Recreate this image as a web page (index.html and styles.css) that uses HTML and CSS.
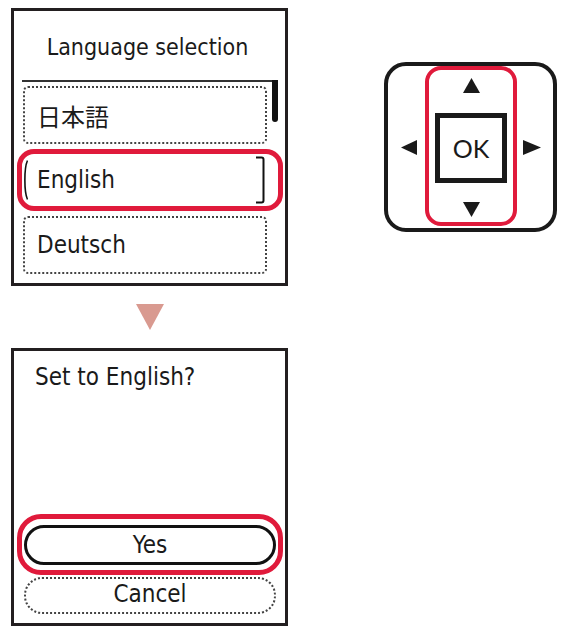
FILE: index.html
```html
<!DOCTYPE html>
<html lang="en">
<head>
<meta charset="utf-8">
<title>Language selection</title>
<link rel="stylesheet" href="styles.css">
</head>
<body>
<div class="page">
  <div class="col">
    <section class="screen">
      <header class="screen-head"><h1 class="title">Language selection</h1></header>
      <div class="divider"></div>
      <div class="list-wrap">
        <ul class="list">
          <li class="item">日本語</li>
          <li class="item item-selected">
            <svg class="br-left" width="5" height="40" viewBox="0 0 5 40"><path d="M4.5 0.5 C1 8 1 32 4.5 39.5" fill="none" stroke="#111" stroke-width="1.6"/></svg>
            <span>English</span>
            <svg class="br-right" width="9" height="48" viewBox="0 0 9 48"><path d="M0 1.5 H5.5 C6.8 1.5 7.5 2.3 7.5 3.5 V44.5 C7.5 45.7 6.8 46.5 5.5 46.5 H0" fill="none" stroke="#111" stroke-width="2"/></svg>
          </li>
          <li class="item">Deutsch</li>
        </ul>
        <div class="scroll"><div class="thumb"></div></div>
      </div>
    </section>
    <svg class="next-arrow" width="28" height="26" viewBox="0 0 28 26"><polygon points="0,0 28,0 14,26" fill="#d99a90"/></svg>
    <section class="screen screen-confirm">
      <p class="question">Set to English?</p>
      <div class="buttons">
        <div class="btn btn-yes">Yes</div>
        <div class="btn btn-cancel">Cancel</div>
      </div>
    </section>
  </div>
  <div class="dpad">
    <svg class="arrow-side" width="16" height="15" viewBox="0 0 16 15"><polygon points="16,0 16,15 0,7.5" fill="#1a1a1a"/></svg>
    <div class="pad-col">
      <svg width="17" height="15" viewBox="0 0 17 15"><polygon points="0,15 17,15 8.5,0" fill="#1a1a1a"/></svg>
      <div class="ok">OK</div>
      <svg width="17" height="15" viewBox="0 0 17 15"><polygon points="0,0 17,0 8.5,15" fill="#1a1a1a"/></svg>
    </div>
    <svg class="arrow-side" width="18" height="15" viewBox="0 0 18 15"><polygon points="0,0 0,15 18,7.5" fill="#1a1a1a"/></svg>
  </div>
</div>
</body>
</html>
```

FILE: styles.css
```css
* {
  box-sizing: border-box;
  margin: 0;
  padding: 0;
}

body {
  background: #fff;
  color: #1a1a1a;
  font-family: "DejaVu Sans Condensed", "DejaVu Sans", "Noto Sans CJK JP", sans-serif;
  font-stretch: condensed;
}

.page {
  display: flex;
  align-items: flex-start;
  gap: 96px;
  padding: 8px 0 0 11px;
}

.col {
  display: flex;
  flex-direction: column;
  align-items: center;
  width: 277px;
}

.screen {
  width: 277px;
  height: 278px;
  border: 3px solid #231f20;
  display: flex;
  flex-direction: column;
}

.screen-head {
  padding: 23px 0 19px;
  text-align: center;
}

.title {
  font-size: 23px;
  line-height: 27px;
  font-weight: normal;
  padding-right: 4px;
}

.divider {
  height: 2px;
  margin: 0 7px 0 8px;
  background: #333;
}

.list-wrap {
  display: flex;
  padding-left: 9px;
}

.list {
  list-style: none;
  width: 244px;
  display: flex;
  flex-direction: column;
  gap: 7px;
  padding-top: 4px;
}

.item {
  height: 58px;
  border: 2px dotted #444;
  border-radius: 5px;
  display: flex;
  align-items: center;
  padding-left: 12px;
  font-size: 24px;
}

.item-selected {
  position: relative;
  border-color: transparent;
  padding-left: 0;
}

.item-selected::after {
  content: "";
  position: absolute;
  top: -4px;
  bottom: -4px;
  left: -8px;
  right: -18px;
  border: 5px solid #e01a3b;
  border-radius: 17px;
}

.br-left {
  display: block;
  margin-left: -2px;
  margin-right: 9px;
}

.br-right {
  display: block;
  margin-left: auto;
  margin-right: 0;
}

.scroll {
  width: 6px;
  margin-left: 5px;
}

.thumb {
  height: 42px;
  margin-top: -2px;
  background: #111;
  border-radius: 0 0 3px 3px;
}

.next-arrow {
  display: block;
  margin: 18px 0;
}

.question {
  font-size: 24px;
  line-height: 28px;
  padding: 12px 0 0 21px;
}

.buttons {
  margin-top: auto;
  padding: 0 9px 9px 10px;
  display: flex;
  flex-direction: column;
  gap: 12px;
}

.btn {
  display: flex;
  align-items: center;
  justify-content: center;
  font-size: 24px;
}

.btn-yes {
  height: 40px;
  border: 3px solid #111;
  border-radius: 20px;
  position: relative;
}

.btn-yes::after {
  content: "";
  position: absolute;
  top: -14px;
  bottom: -13px;
  left: -10px;
  right: -10px;
  border: 5px solid #e01a3b;
  border-radius: 24px;
}

.btn-cancel {
  height: 37px;
  border: 2px dotted #444;
  border-radius: 18px;
  padding-bottom: 4px;
}

.dpad {
  margin-top: 54px;
  width: 173px;
  height: 170px;
  border: 4px solid #1a1a1a;
  border-radius: 22px;
  display: flex;
  align-items: flex-start;
  padding-left: 13px;
}

.arrow-side {
  display: block;
  align-self: center;
}

.pad-col {
  width: 92px;
  height: 160px;
  margin: 0 6px 0 8px;
  border: 4px solid #e01a3b;
  border-radius: 16px;
  display: flex;
  flex-direction: column;
  align-items: center;
  justify-content: space-between;
  padding: 8px 0 5px;
}

.pad-col svg {
  display: block;
}

.ok {
  width: 72px;
  height: 70px;
  border: 5px solid #1a1a1a;
  display: flex;
  align-items: center;
  justify-content: center;
  font-family: Lato, "Open Sans", sans-serif;
  font-stretch: normal;
  font-size: 25px;
}
```
